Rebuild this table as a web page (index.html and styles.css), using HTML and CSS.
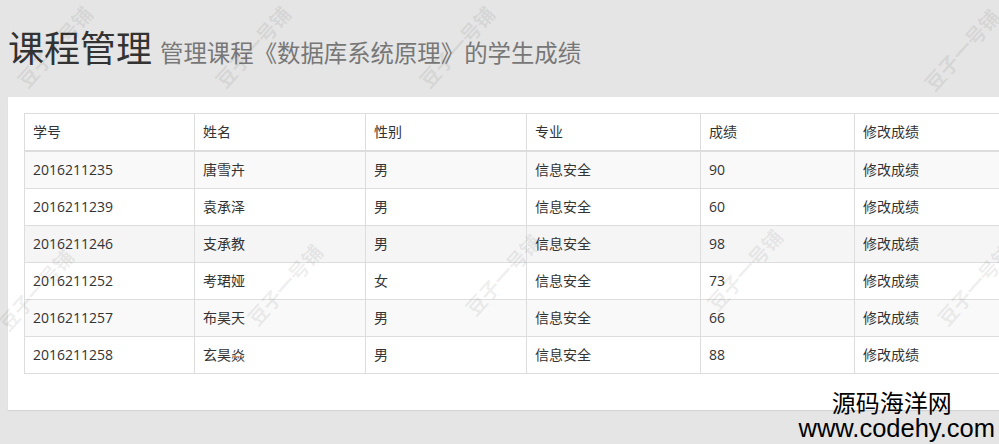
FILE: index.html
```html
<!DOCTYPE html>
<html lang="zh-CN">
<head>
<meta charset="utf-8">
<title>课程管理</title>
<link rel="stylesheet" href="styles.css">
</head>
<body>
<div class="page">
  <h1 class="page-title">课程管理 <small>管理课程《数据库系统原理》的学生成绩</small></h1>
  <div class="panel">
    <table class="grades">
      <colgroup>
        <col class="c1"><col class="c2"><col class="c3"><col class="c4"><col class="c5"><col class="c6">
      </colgroup>
      <thead>
        <tr><th>学号</th><th>姓名</th><th>性别</th><th>专业</th><th>成绩</th><th>修改成绩</th></tr>
      </thead>
      <tbody>
        <tr><td>2016211235</td><td>唐雪卉</td><td>男</td><td>信息安全</td><td>90</td><td>修改成绩</td></tr>
        <tr><td>2016211239</td><td>袁承泽</td><td>男</td><td>信息安全</td><td>60</td><td>修改成绩</td></tr>
        <tr class="hover"><td>2016211246</td><td>支承教</td><td>男</td><td>信息安全</td><td>98</td><td>修改成绩</td></tr>
        <tr><td>2016211252</td><td>考珺娅</td><td>女</td><td>信息安全</td><td>73</td><td>修改成绩</td></tr>
        <tr><td>2016211257</td><td>布昊天</td><td>男</td><td>信息安全</td><td>66</td><td>修改成绩</td></tr>
        <tr><td>2016211258</td><td>玄昊焱</td><td>男</td><td>信息安全</td><td>88</td><td>修改成绩</td></tr>
      </tbody>
    </table>
  </div>
</div>

<div class="watermarks" aria-hidden="true">
  <span class="wm wm1">豆子一号铺</span>
  <span class="wm wm2">豆子一号铺</span>
  <span class="wm wm3">豆子一号铺</span>
  <span class="wm wm4">豆子一号铺</span>
  <span class="wm wm5">豆子一号铺</span>
  <span class="wm wm6">豆子一号铺</span>
  <span class="wm wm7">豆子一号铺</span>
  <span class="wm wm8">豆子一号铺</span>
  <span class="wm wm9">豆子一号铺</span>
</div>

<div class="site-mark">
  <div class="site-cn">源码海洋网</div>
  <div class="site-en">www.codehy.com</div>
</div>
</body>
</html>
```

FILE: styles.css
```css
html, body {
  margin: 0;
  padding: 0;
  overflow: hidden;
}
body {
  background: #e5e5e5;
  font-family: "Open Sans", "Noto Sans CJK SC", sans-serif;
  font-size: 14px;
  line-height: 20px;
  color: #333;
  width: 999px;
  height: 444px;
  position: relative;
}
.page {
  padding: 26px 0 0 8px;
  width: 1200px;
}
.page-title {
  margin: 0 0 25px 0;
  font-family: "Noto Sans CJK SC", sans-serif;
  font-size: 36px;
  font-weight: 400;
  line-height: 40px;
  color: #333;
}
.page-title small {
  font-size: 23.4px;
  color: #777;
  font-weight: 400;
}
.panel {
  background: #fff;
  padding: 16px 16px 36px 16px;
  box-shadow: 0 1px 1px rgba(0,0,0,0.08);
}
.grades {
  border-collapse: collapse;
  table-layout: fixed;
  width: 1030px;
  border: 1px solid #ddd;
}
.grades .c1 { width: 170px; }
.grades .c2 { width: 171px; }
.grades .c3 { width: 161px; }
.grades .c4 { width: 174px; }
.grades .c5 { width: 154px; }
.grades .c6 { width: 200px; }
.grades th,
.grades td {
  border: 1px solid #ddd;
  padding: 8px;
  text-align: left;
  font-weight: 400;
  line-height: 20px;
  white-space: nowrap;
}
.grades thead th {
  border-bottom: 2px solid #ddd;
}
.grades tbody tr:nth-child(odd) {
  background: #f9f9f9;
}
.grades tbody tr.hover {
  background: #f5f5f5;
}
.watermarks {
  position: absolute;
  inset: 0;
  pointer-events: none;
  overflow: hidden;
}
.wm {
  position: absolute;
  font-family: "Noto Sans CJK SC", sans-serif;
  font-weight: 700;
  font-size: 20px;
  line-height: 20px;
  color: rgba(0,0,0,0.08);
  transform: translate(-50%, -50%) rotate(-48deg);
  white-space: nowrap;
}
.wm1 { left: 55px; top: 47px; }
.wm2 { left: 253px; top: 47px; }
.wm3 { left: 457px; top: 47px; }
.wm4 { left: 962px; top: 50px; }
.wm5 { left: 36px; top: 290px; }
.wm6 { left: 285px; top: 285px; }
.wm7 { left: 503px; top: 275px; }
.wm8 { left: 745px; top: 270px; }
.wm9 { left: 975px; top: 285px; }
.site-mark {
  position: absolute;
  right: 4px;
  bottom: 2px;
  text-align: center;
  color: #000;
}
.site-cn {
  font-family: "Noto Sans CJK SC", sans-serif;
  font-size: 24px;
  line-height: 24px;
  margin-right: 10px;
}
.site-en {
  font-family: "Liberation Sans", Arial, sans-serif;
  font-size: 25.5px;
  line-height: 28px;
}
```
